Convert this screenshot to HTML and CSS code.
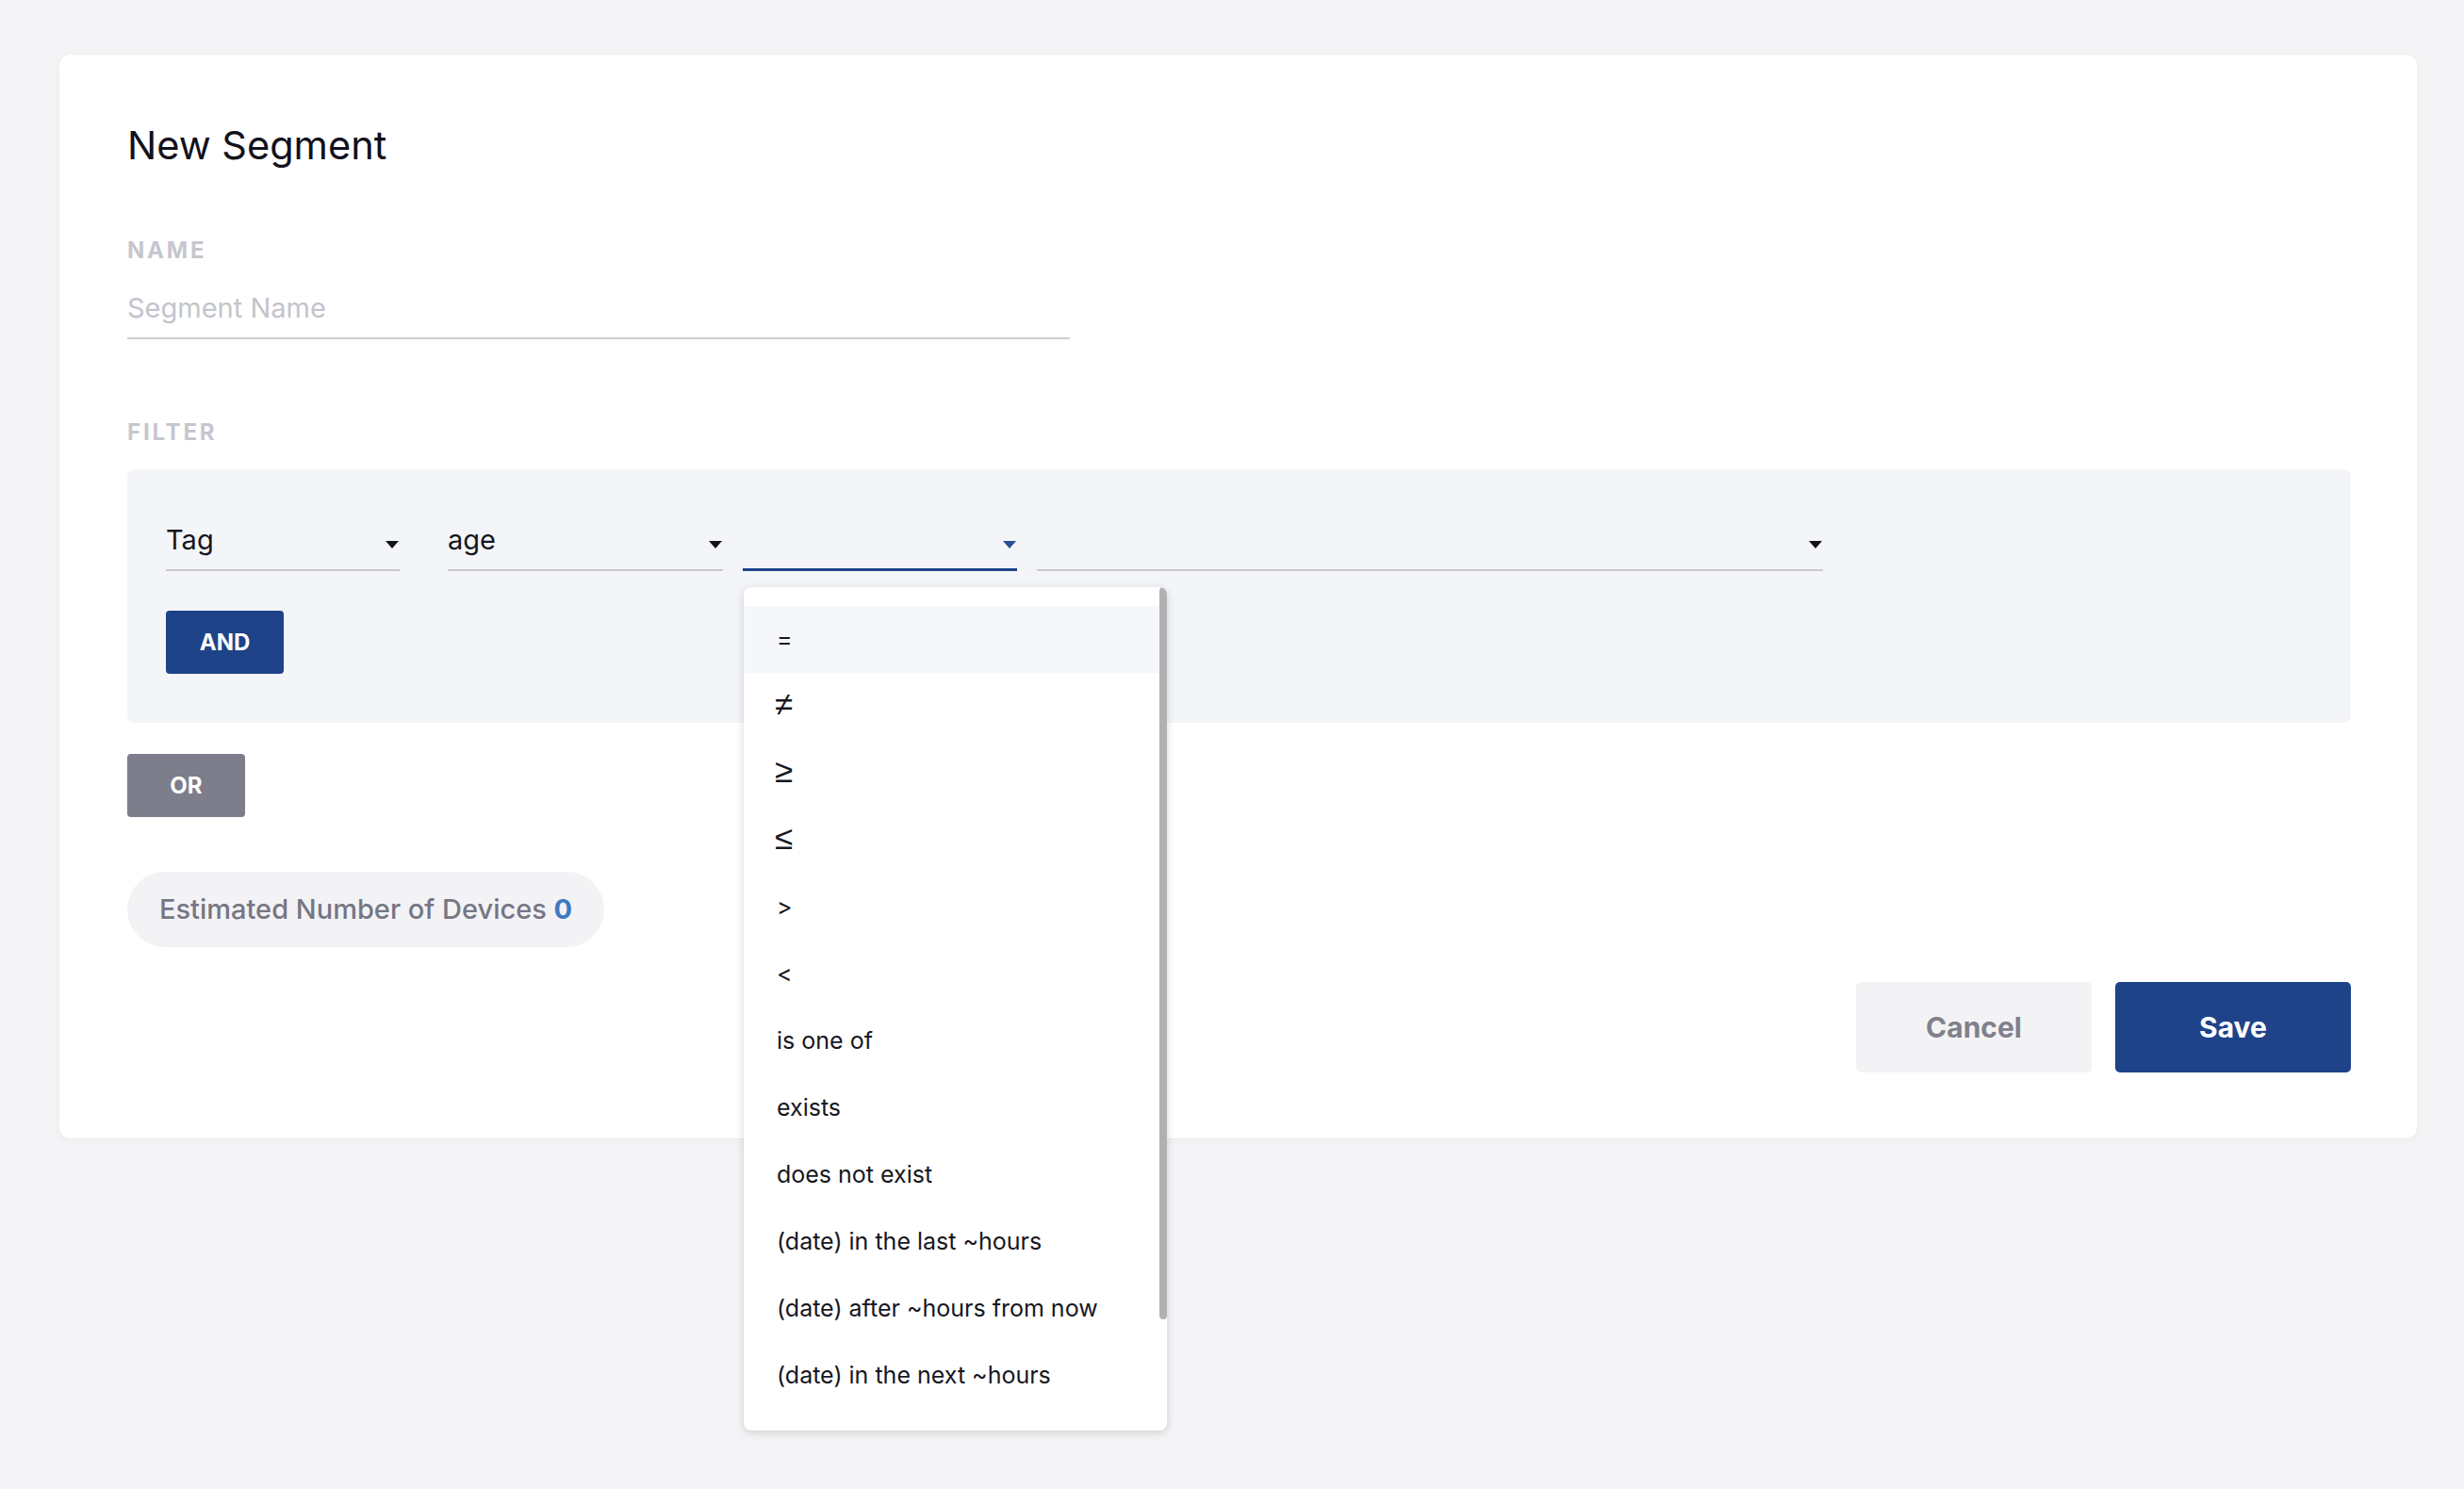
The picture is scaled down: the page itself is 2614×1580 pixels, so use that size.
FILE: index.html
```html
<!DOCTYPE html>
<html lang="en">
<head>
  <meta charset="UTF-8" />
  <meta name="viewport" content="width=device-width, initial-scale=1.0"/>
  <title>New Segment</title>
  <link rel="stylesheet" href="styles.css">
</head>
<body>
  <div class="card">
    <h1>New Segment</h1>

    <div class="field-label">Name</div>
    <input class="name-input" type="text" placeholder="Segment Name">

    <div class="field-label filter-label">Filter</div>
    <div class="filter-box">
      <div class="filter-row">
        <div class="select select-field">
          <span>Tag</span>
          <i class="caret"></i>
        </div>
        <div class="select select-key">
          <span>age</span>
          <i class="caret"></i>
        </div>
        <div class="select select-op is-open">
          <span></span>
          <i class="caret"></i>
          <div class="menu">
            <ul>
              <li class="active">=</li>
              <li class="sym">≠</li>
              <li class="sym">≥</li>
              <li class="sym">≤</li>
              <li>&gt;</li>
              <li>&lt;</li>
              <li>is one of</li>
              <li>exists</li>
              <li>does not exist</li>
              <li>(date) in the last ~hours</li>
              <li>(date) after ~hours from now</li>
              <li>(date) in the next ~hours</li>
              <li>(date) before ~hours ago</li>
            </ul>
            <div class="menu-thumb"></div>
          </div>
        </div>
        <div class="select select-value">
          <span></span>
          <i class="caret"></i>
        </div>
      </div>
      <button class="btn btn-and">AND</button>
    </div>

    <button class="btn btn-or">OR</button>

    <div class="estimate">Estimated Number of Devices <b>0</b></div>

    <div class="actions">
      <button class="btn-lg btn-cancel">Cancel</button>
      <button class="btn-lg btn-save">Save</button>
    </div>
  </div>
</body>
</html>
```

FILE: styles.css
```css
body {
  font-family: Inter, "Noto Sans", sans-serif;
  background: #f4f4f6;
  margin: 0;
  min-height: 100vh;
  box-sizing: border-box;
  padding: 58px 50px 60px 63px;
  color: #16161f;
}

.card {
  background: #ffffff;
  border-radius: 12px;
  box-shadow: 0 2px 10px rgba(0, 0, 0, 0.04);
  padding: 72px 70px 70px 72px;
}

h1 {
  font-size: 41.5px;
  line-height: 49px;
  font-weight: 400;
  margin: 0;
  color: #11111b;
}

.field-label {
  font-size: 24px;
  line-height: 30px;
  font-weight: 700;
  letter-spacing: 2.8px;
  text-transform: uppercase;
  color: #c6c6ce;
  margin-top: 72px;
}

.filter-label {
  margin-top: 84px;
}

.name-input {
  display: block;
  width: 1000px;
  box-sizing: border-box;
  margin-top: 29px;
  padding: 0 0 14px;
  border: none;
  border-bottom: 2px solid #cdcdd2;
  background: transparent;
  font-family: inherit;
  font-size: 29px;
  line-height: 34px;
  outline: none;
}

.name-input::placeholder {
  color: #c4c4cc;
}

.filter-box {
  margin-top: 24px;
  background: #f4f5f8;
  border-radius: 8px;
  padding: 58px 41px 52px;
}

.filter-row {
  display: flex;
  gap: 21px;
}

.select {
  position: relative;
  display: flex;
  align-items: center;
  height: 34px;
  padding-bottom: 14px;
  border-bottom: 2px solid #cacace;
  font-size: 29px;
  line-height: 34px;
  color: #16161f;
}

.select span {
  flex: 1;
}

.caret {
  width: 0;
  height: 0;
  border-left: 7px solid transparent;
  border-right: 7px solid transparent;
  border-top: 8px solid #12121a;
  margin: 10px 1px 0 0;
}

.select-field { width: 248px; margin-right: 30px; }
.select-key { width: 292px; }
.select-op { width: 291px; }
.select-value { width: 834px; }

.select.is-open {
  border-bottom: 3px solid #1e4388;
  padding-bottom: 13px;
}

.select.is-open .caret {
  border-top-color: #2a4f97;
}

.btn {
  display: block;
  height: 67px;
  width: 125px;
  border: none;
  border-radius: 4px;
  color: #ffffff;
  font-family: inherit;
  font-size: 24px;
  font-weight: 700;
  cursor: pointer;
}

.btn-and {
  margin-top: 42px;
  background: #1e4388;
}

.btn-or {
  margin-top: 33px;
  background: #7d7d8b;
}

.estimate {
  display: inline-block;
  margin-top: 58px;
  height: 80px;
  line-height: 80px;
  padding: 0 34px;
  border-radius: 40px;
  background: #f3f3f6;
  color: #767684;
  font-size: 29px;
  font-weight: 500;
}

.estimate b {
  color: #3f79c3;
  font-weight: 700;
}

.actions {
  display: flex;
  justify-content: flex-end;
  gap: 25px;
  margin-top: 37px;
}

.btn-lg {
  width: 250px;
  height: 96px;
  border: none;
  border-radius: 5px;
  font-family: inherit;
  font-size: 30px;
  font-weight: 700;
  cursor: pointer;
}

.btn-cancel {
  background: #f3f3f5;
  color: #80808c;
}

.btn-save {
  background: #1e4388;
  color: #ffffff;
}

/* operator dropdown, open below its select */
.menu {
  position: absolute;
  top: calc(100% + 20px);
  left: 1px;
  width: 449px;
  height: 895px;
  overflow: hidden;
  background: #ffffff;
  border-radius: 8px;
  box-shadow: 0 2px 10px rgba(0, 0, 0, 0.16);
  z-index: 10;
}

.menu ul {
  list-style: none;
  margin: 0;
  padding: 20px 8px 0 0;
}

.menu li {
  height: 71px;
  line-height: 71px;
  padding-left: 35px;
  font-size: 25px;
  color: #17171f;
  white-space: nowrap;
}

.menu li.sym {
  font-family: "Liberation Sans", sans-serif;
  font-size: 35px;
  line-height: 66px;
  padding-left: 33px;
}

.menu li.active {
  background: #f6f7fa;
}

.menu-thumb {
  position: absolute;
  top: 0;
  right: 0;
  width: 8px;
  height: 777px;
  border-radius: 4px;
  background: #b1b1b3;
}
```
